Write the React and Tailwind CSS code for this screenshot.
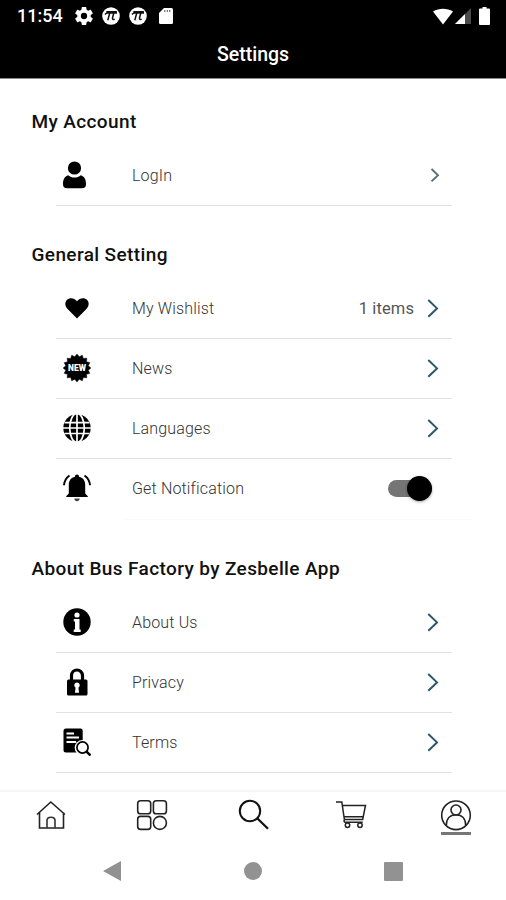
import React from 'react';

const Icon = ({ children }) => (
  <svg viewBox="0 0 28 28" className="mb-px h-7 w-7 shrink-0" fill="#000">{children}</svg>
);

const UserIcon = () => (
  <Icon>
    <circle cx="11.5" cy="7" r="6.6" />
    <path d="M5.2 14.3C7 15.9 9 16.6 11.5 16.6s4.500-.7 6.300-2.300C21.300 15.300 23 18.400 23 23c0 3-1.300 4.200-4 4.200H4c-2.700 0-4-1.200-4-4.200 0-4.600 1.700-7.700 5.200-8.700Z" />
  </Icon>
);

const HeartIcon = () => (
  <Icon>
    <path d="M14 24.500 4.600 15C1.700 12 1.700 8.200 3.800 6 6.600 3.200 11.200 3.700 14 7.300c2.800-3.600 7.400-4.100 10.200-1.300 2.100 2.200 2.100 6-.8 9Z" />
  </Icon>
);

const badgePoints = Array.from({ length: 32 }, (_, i) => {
  const r = i % 2 ? 11.4 : 13.9;
  const a = (i * Math.PI) / 16;
  return `${14 + r * Math.sin(a)},${14 - r * Math.cos(a)}`;
}).join(' ');

const NewIcon = () => (
  <Icon>
    <polygon points={badgePoints} strokeLinejoin="round" stroke="#000" strokeWidth=".5" />
    <text x="14" y="17.200" textAnchor="middle" textLength="18" lengthAdjust="spacingAndGlyphs" fill="#fff" fontSize="8.500" fontWeight="900" fontFamily="Roboto, sans-serif">NEW</text>
  </Icon>
);

const GlobeIcon = () => (
  <Icon>
    <circle cx="14" cy="14" r="13.700" />
    <g fill="none" stroke="#fff" strokeWidth="1.700">
      <path d="M14 0v28M0 14h28M1.500 8.700h25M1.500 19.500h25" />
      <ellipse cx="14" cy="14" rx="7.300" ry="14.500" />
    </g>
  </Icon>
);

const BellIcon = () => (
  <Icon>
    <path d="M14 .5c1.300 0 2 .9 2 2.300 4 .9 6.200 4 6.200 8v8.700l2.600 2.700v.8H3.200v-.8l2.600-2.700v-8.700c0-4 2.200-7.100 6.200-8C12 1.400 12.700.5 14 .5Z" />
    <path d="M11.300 24.600h5.400c-.2 1.700-1.200 2.700-2.700 2.700s-2.500-1-2.700-2.700Z" fill="#444" />
    <path d="M6.500 1.500C3.200 3.800 1.300 7 1 11.300M21.500 1.500c3.300 2.300 5.200 5.500 5.500 9.800" fill="none" stroke="#000" strokeWidth="2" />
  </Icon>
);

const InfoIcon = () => (
  <Icon>
    <circle cx="14" cy="14" r="13.700" />
    <circle cx="14" cy="7" r="2.600" fill="#fff" />
    <path d="M10.800 11h5.700v10.500h1.200v2.400h-7v-2.400h1.300v-8.100h-1.200Z" fill="#fff" />
  </Icon>
);

const LockIcon = () => (
  <Icon>
    <path d="M8.500 13V7.500a5.500 5.500 0 0 1 11 0V13" fill="none" stroke="#000" strokeWidth="3.200" />
    <rect x="4" y="11.500" width="20.500" height="16" rx="1.500" />
    <path d="M14 14.500a2.800 2.800 0 0 1 1.400 5.200l.7 5.100h-4.200l.7-5.100A2.800 2.800 0 0 1 14 14.500Z" fill="#fff" />
  </Icon>
);

const TermsIcon = () => (
  <Icon>
    <path d="M3 .5h14.500a2.200 2.200 0 0 1 2.200 2.200V24.500H3A2.500 2.500 0 0 1 .5 22V3A2.500 2.500 0 0 1 3 .5Z" />
    <path d="M3.500 5.500h7.500M3.500 9.500h12.500M3.500 14h9.500" stroke="#fff" strokeWidth="1.900" />
    <circle cx="19.500" cy="19.800" r="7.800" fill="#fff" />
    <circle cx="19.500" cy="19.500" r="5.600" fill="#fff" stroke="#000" strokeWidth="1.700" />
    <path d="m23.300 23.300 4.200 4.200" stroke="#000" strokeWidth="2.400" />
  </Icon>
);

const Chevron = ({ small }) =>
  small ? (
    <svg className="mb-px mr-[11px] h-5 w-3" viewBox="0 0 12 20" fill="none" stroke="#5a6f78" strokeWidth="1.900"><path d="m2.500 4 6.500 6.200-6.500 6.200" /></svg>
  ) : (
    <svg className="mb-px mr-[12px] h-5 w-[14px]" viewBox="0 0 14 20" fill="none" stroke="#2b566b" strokeWidth="2"><path d="m2.300 2 8.700 8.400-8.700 8.400" /></svg>
  );

const Row = ({ icon, label, children, last }) => (
  <div className={`ml-[56px] flex h-[60px] w-[396px] items-center border-b pl-[7px] ${last ? 'border-transparent' : 'border-[#e2e2e2]'}`}>
    {icon}
    <span className="ml-[41px] flex-1 text-[16px] font-light leading-5 tracking-[0.16px] text-[#333]">{label}</span>
    {children}
  </div>
);

const Heading = ({ children }) => (
  <h2 className="pl-[31.5px] text-[19px] font-medium leading-6 tracking-[0.38px] text-[#111]">{children}</h2>
);

const PiIcon = () => (
  <svg className="h-[18px] w-[18px]" viewBox="0 0 18 18">
    <circle cx="9" cy="9" r="8.800" fill="#fff" />
    <path d="M3 7.500c1-1.300 2-1.600 3.300-1.400h8.700M4.300 4.700h10.600M7.700 6.300 5.800 13.300M11.700 6.300 10.500 11c-.3 1.500.7 2 2.200 1.200" fill="none" stroke="#111" strokeWidth="1.500" />
  </svg>
);

const StatusBar = () => (
  <div className="flex h-8 items-center pl-[17px] pr-4 text-white">
    <span className="w-[46px] whitespace-nowrap text-[18px] font-medium leading-8">11:54</span>
    <svg className="ml-3 h-[18px] w-[18px]" viewBox="2 2 20 20" fill="#fff">
      <path fillRule="evenodd" d="M19.430 12.980c.04-.32.07-.64.07-.98s-.03-.66-.07-.98l2.110-1.650c.19-.15.240-.42.120-.64l-2-3.460c-.12-.22-.39-.3-.61-.22l-2.490 1c-.52-.4-1.080-.73-1.690-.98l-.38-2.650C14.460 2.180 14.250 2 14 2h-4c-.25 0-.46.180-.49.420l-.38 2.650c-.61.250-1.170.590-1.690.98l-2.490-1c-.23-.09-.49 0-.61.220l-2 3.460c-.13.220-.07.490.120.640l2.110 1.650c-.04.320-.07.650-.07.980s.030.660.070.980l-2.110 1.650c-.19.150-.24.420-.12.640l2 3.460c.12.220.39.300.61.220l2.490-1c.52.400 1.080.730 1.690.980l.38 2.650c.03.240.24.420.49.420h4c.25 0 .46-.18.490-.42l.38-2.650c.61-.25 1.170-.59 1.690-.98l2.490 1c.23.090.49 0 .61-.22l2-3.460c.12-.22.070-.49-.12-.64ZM12 15.500a3.500 3.500 0 1 1 0-7 3.500 3.500 0 0 1 0 7Z" />
    </svg>
    <div className="ml-[9px] flex gap-[9px]"><PiIcon /><PiIcon /></div>
    <svg className="ml-[11.5px] h-4 w-[14px]" viewBox="0 0 14 16">
      <path d="M5 0h7.500Q14 0 14 1.500v13q0 1.500-1.500 1.500h-11Q0 16 0 14.500V5Z" fill="#fff" />
      <path d="M5.800 2v2M8.300 2v2M10.800 2v2" stroke="#555" strokeWidth="1" />
    </svg>
    <svg className="ml-auto h-[17px] w-5" viewBox="0 0 20 17" fill="#fff"><path d="M0 3.500C6-.3 14-.3 20 3.500L10 16.500Z" /></svg>
    <svg className="ml-[2px] h-4 w-4" viewBox="0 0 16 16"><path d="M16 0v16H0Z" fill="#4a4a4a" /><path d="M10 6v10H0Z" fill="#fff" /></svg>
    <svg className="mb-px ml-2 h-[18px] w-[11px]" viewBox="0 0 11 18" fill="#fff"><path d="M3.500 0h4v1.500H10q1 0 1 1V17q0 1-1 1H1q-1 0-1-1V2.500q0-1 1-1h2.500Z" /></svg>
  </div>
);

const TabBar = () => (
  <nav className="flex h-[56px] items-start justify-between border-t-2 border-[#f6f6f6] pl-[36px] pr-[34px] pt-[6px]">
    <svg className="h-[34px] w-[30px]" viewBox="0 0 30 34" fill="none" stroke="#222" strokeWidth="1.600">
      <path d="M1 16.500 14.800 4 29 16.500M3.500 14.500V30h24V14.500" />
      <path d="M11 30v-7.500q0-3.300 4-3.300t4 3.300V30" stroke="#333" />
    </svg>
    <svg className="ml-[1px] h-[34px] w-8" viewBox="0 0 32 34" fill="none" stroke="#222" strokeWidth="1.600">
      <rect x="1.700" y="2.700" width="13" height="13" rx="2.800" /><rect x="17.400" y="2.700" width="13" height="13" rx="2.800" />
      <rect x="1.700" y="18.400" width="13" height="13" rx="2.800" /><circle cx="23.900" cy="24.900" r="6.500" />
    </svg>
    <svg className="h-[34px] w-8" viewBox="0 0 32 34" fill="none" stroke="#111" strokeWidth="2">
      <circle cx="12" cy="13" r="10.200" /><path d="m19.200 20.300 10.800 10.500" strokeWidth="2.300" />
    </svg>
    <svg className="-ml-[3px] mr-[3px] h-[34px] w-8" viewBox="0 0 32 34" fill="none" stroke="#222" strokeWidth="1.500">
      <path d="M0 4h5.800l2.600 17.500h18.300L29.500 7.500H6.400M8 18.700h19.200M8.400 21.500q-1 2.800 1.200 2.800h17.100" />
      <circle cx="11.500" cy="27.300" r="2.200" /><circle cx="24" cy="27.300" r="2.200" />
    </svg>
    <div className="flex flex-col items-center">
      <svg className="h-[34px] w-8" viewBox="0 0 32 34" fill="none" stroke="#222" strokeWidth="1.600">
        <circle cx="16" cy="17.300" r="14.300" /><circle cx="16" cy="12" r="5" />
        <path d="M6.300 27.600C6.300 20.800 10 16.800 16 16.800s9.700 4 9.700 10.800" />
      </svg>
      <div className="h-[3px] w-[30px] bg-[#777]" />
    </div>
  </nav>
);

export default function App() {
  return (
    <div className="flex h-[900px] w-[506px] flex-col overflow-hidden bg-white font-['Roboto',sans-serif]">
      <header className="h-[79px] border-b border-[#888] bg-black">
        <StatusBar />
        <h1 className="text-center text-[19.5px] font-medium leading-[46px] text-white">Settings</h1>
      </header>
      <main className="h-[711px]">
        <section className="h-[127px] pt-[31px]">
          <Heading>My Account</Heading>
          <div className="pt-3"><Row icon={<UserIcon />} label="LogIn"><Chevron small /></Row></div>
        </section>
        <section className="h-[313px] pt-[37px]">
          <Heading>General Setting</Heading>
          <div className="pt-3">
            <Row icon={<HeartIcon />} label="My Wishlist">
              <span className="mr-[12px] text-[16.5px] leading-5 tracking-[0.1px] text-[#555]">1 items</span><Chevron />
            </Row>
            <Row icon={<NewIcon />} label="News"><Chevron /></Row>
            <Row icon={<GlobeIcon />} label="Languages"><Chevron /></Row>
            <Row icon={<BellIcon />} label="Get Notification" last>
              <div className="mr-[20.5px] flex h-[17px] w-[44px] items-center justify-end rounded-full bg-[#757575]">
                <div className="h-[25px] w-[25px] shrink-0 rounded-full bg-black shadow-[0_1px_3px_rgba(0,0,0,0.35)]" />
              </div>
            </Row>
          </div>
          <div className="ml-[125px] h-px w-[346px] bg-[#f9f9f9]" />
        </section>
        <section className="pt-[38px]">
          <Heading>About Bus Factory by Zesbelle App</Heading>
          <div className="pt-3">
            <Row icon={<InfoIcon />} label="About Us"><Chevron /></Row>
            <Row icon={<LockIcon />} label="Privacy"><Chevron /></Row>
            <Row icon={<TermsIcon />} label="Terms"><Chevron /></Row>
          </div>
        </section>
      </main>
      <TabBar />
      <div className="flex h-[50px] items-center justify-between pl-[103px] pr-[103px]">
        <svg className="h-5 w-[18px]" viewBox="0 0 18 20" fill="#929292"><path d="M18 0v20L0 10Z" /></svg>
        <div className="h-[18px] w-[18px] rounded-full bg-[#929292]" />
        <div className="h-[19px] w-[19px] rounded-[1px] bg-[#929292]" />
      </div>
    </div>
  );
}
